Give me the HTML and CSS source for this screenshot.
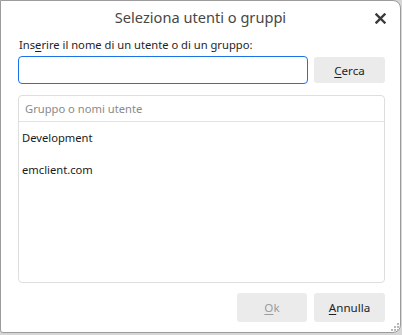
FILE: index.html
```html
<!DOCTYPE html>
<html lang="it">
<head>
  <meta charset="UTF-8" />
  <title>Seleziona utenti o gruppi</title>
  <link rel="stylesheet" href="styles.css">
</head>
<body>

  <div class="dialog">
    <div class="titlebar">
      <span class="title">Seleziona utenti o gruppi</span>
      <button class="close" title="Chiudi">
        <svg width="11" height="11" viewBox="0 0 11 11">
          <path d="M1.5 1.5 L9.5 9.5 M9.5 1.5 L1.5 9.5" stroke="#3a3a3a" stroke-width="2.4" stroke-linecap="square"/>
        </svg>
      </button>
    </div>

    <div class="content">
      <label for="search" class="search-label">Ins<u>e</u>rire il nome di un utente o di un gruppo:</label>
      <div class="search-row">
        <input type="text" id="search" class="search-input">
        <button class="btn"><u>C</u>erca</button>
      </div>

      <div class="list">
        <div class="list-header">Gruppo o nomi utente</div>
        <div class="list-item">Development</div>
        <div class="list-item">emclient.com</div>
      </div>

      <div class="footer">
        <button class="btn disabled"><u>O</u>k</button>
        <button class="btn"><u>A</u>nnulla</button>
      </div>
    </div>

    <svg class="grip" width="10" height="10" viewBox="0 0 10 10">
      <rect x="7" y="1" width="2" height="2" fill="#b8b8b8"/>
      <rect x="4" y="4" width="2" height="2" fill="#b8b8b8"/>
      <rect x="7" y="4" width="2" height="2" fill="#b8b8b8"/>
      <rect x="1" y="7" width="2" height="2" fill="#b8b8b8"/>
      <rect x="4" y="7" width="2" height="2" fill="#b8b8b8"/>
      <rect x="7" y="7" width="2" height="2" fill="#b8b8b8"/>
    </svg>
  </div>

</body>
</html>
```

FILE: styles.css
```css
body {
  margin: 0;
  padding: 0;
  background-color: #d6d6d6;
  font-family: "Noto Sans", "Open Sans", sans-serif;
  font-size: 11.2px;
  color: #1e1e1e;
}

.dialog {
  position: relative;
  box-sizing: border-box;
  width: 401px;
  height: 333px;
  background-color: #ffffff;
  border: 1px solid #9c9c9c;
  border-radius: 0 8px 8px 3px;
  display: flex;
  flex-direction: column;
}

.titlebar {
  position: relative;
  height: 33px;
  display: flex;
  align-items: center;
  justify-content: center;
}

.title {
  font-size: 14.6px;
  color: #474747;
  margin-top: -1px;
}

.close {
  position: absolute;
  right: 13px;
  top: 10px;
  width: 14px;
  height: 14px;
  padding: 0;
  border: none;
  background: none;
  display: flex;
  align-items: center;
  justify-content: center;
}

.content {
  flex: 1;
  display: flex;
  flex-direction: column;
  padding: 3px 15px 10px 17px;
}

.search-label {
  display: block;
  line-height: 16px;
  padding-left: 1px;
  color: #1e1e1e;
}

.search-label u, .btn u {
  text-decoration-thickness: 1px;
  text-underline-offset: 2px;
}

.search-row {
  display: flex;
  align-items: center;
  gap: 6px;
  margin-top: 3px;
}

.search-input {
  box-sizing: border-box;
  width: 290px;
  height: 28px;
  margin: 0;
  border: 1px solid #1a73e8;
  border-radius: 4px;
  outline: none;
  padding: 0 6px;
  font: inherit;
}

.btn {
  box-sizing: border-box;
  width: 71px;
  height: 26px;
  border: none;
  border-radius: 3px;
  background-color: #ebebeb;
  color: #1e1e1e;
  font-family: inherit;
  font-size: 11.6px;
  padding: 0;
}

.list {
  margin-top: 11px;
  height: 188px;
  box-sizing: border-box;
  border: 1px solid #dedede;
  border-radius: 4px;
}

.list-header {
  height: 25px;
  line-height: 25px;
  padding-left: 6px;
  color: #8a8a8a;
  border-bottom: 1px solid #e2e2e2;
}

.list-item {
  height: 32px;
  line-height: 32px;
  padding-left: 3px;
  color: #1a1a1a;
}

.footer {
  display: flex;
  justify-content: flex-end;
  gap: 7px;
  margin-top: 10px;
}

.footer .btn {
  height: 29px;
}

.footer .btn:first-child {
  width: 70px;
}

.btn.disabled {
  color: #9c9c9c;
}

.grip {
  position: absolute;
  right: 0;
  bottom: 0;
}
```
